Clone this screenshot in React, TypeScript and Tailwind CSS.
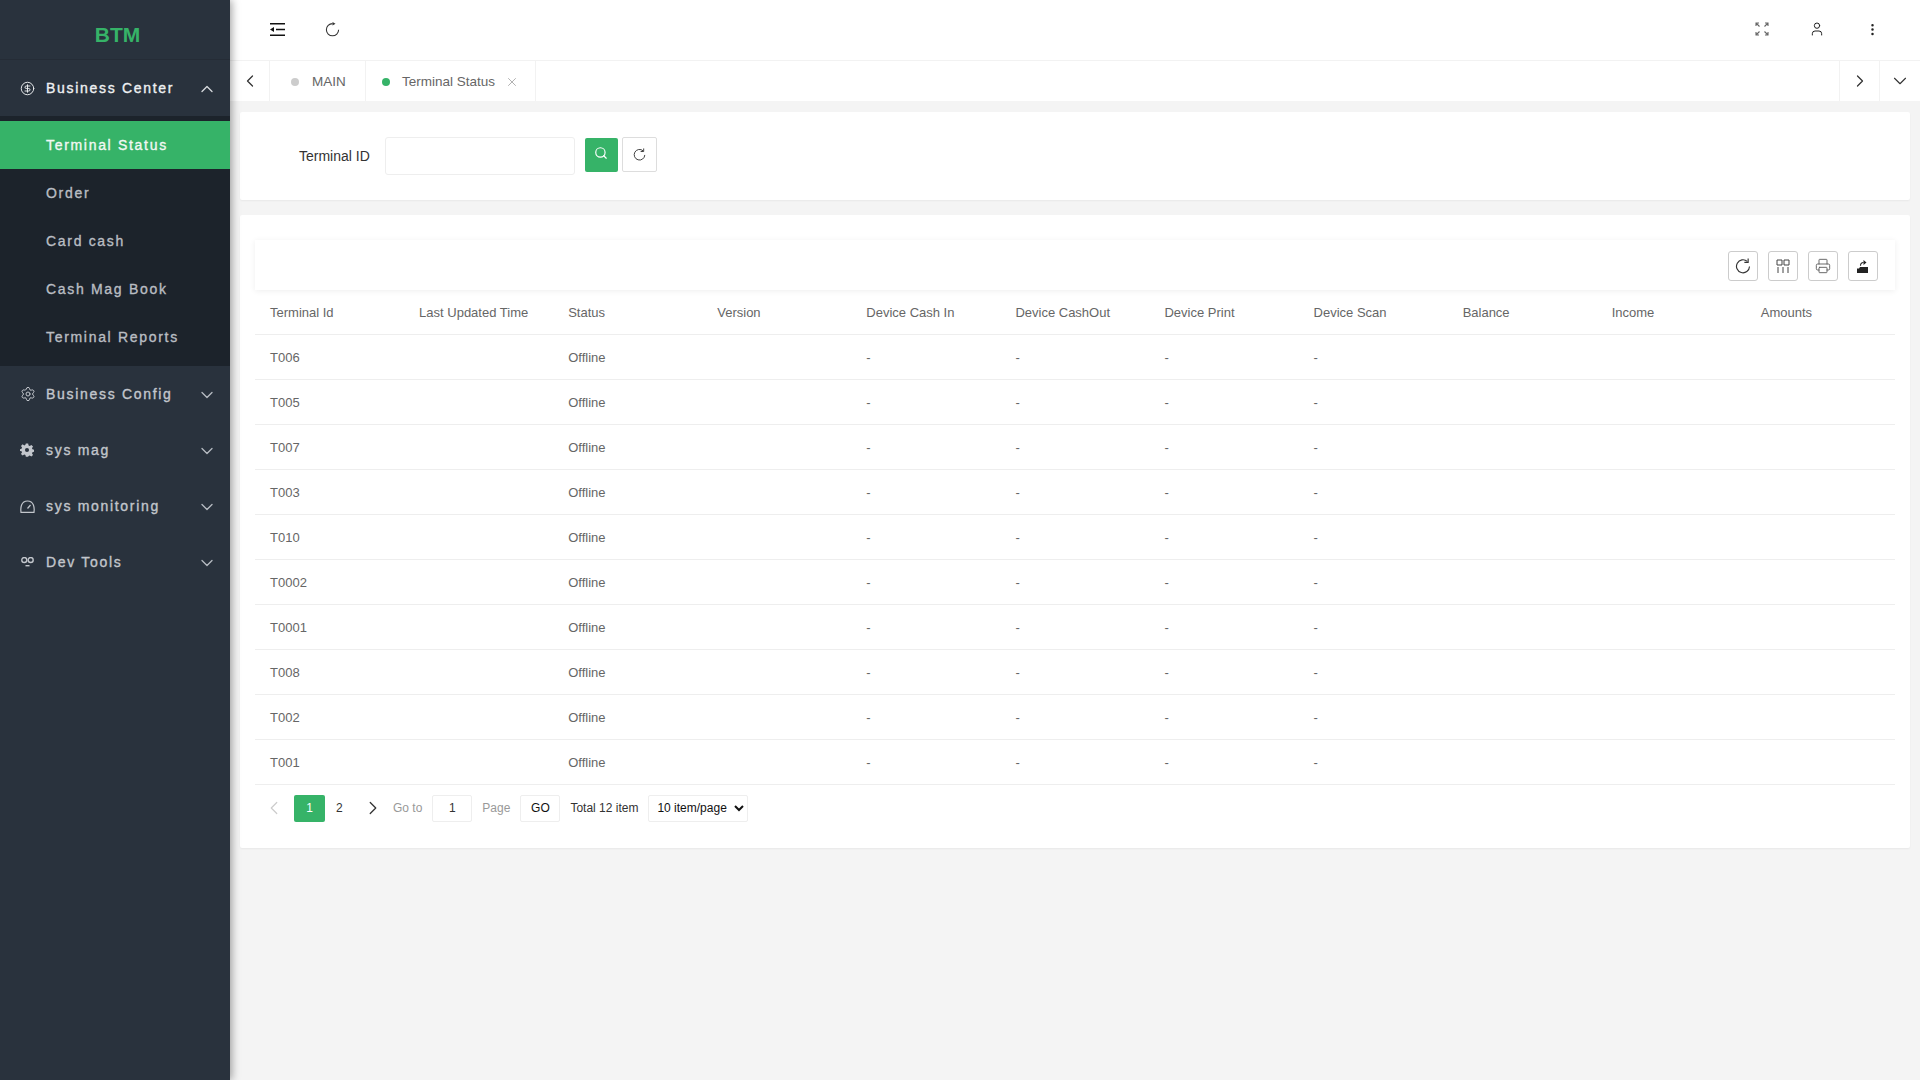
import {
  ChevronDown,
  ChevronLeft,
  ChevronRight,
  ChevronUp,
  CircleDollarSign,
  EllipsisVertical,
  Printer,
  Search,
  Settings,
  User,
  X,
} from "lucide-react";
import { ReactNode } from "react";

const columns = [
  "Terminal Id",
  "Last Updated Time",
  "Status",
  "Version",
  "Device Cash In",
  "Device CashOut",
  "Device Print",
  "Device Scan",
  "Balance",
  "Income",
  "Amounts",
];

const terminals = ["T006", "T005", "T007", "T003", "T010", "T0002", "T0001", "T008", "T002", "T001"];

const subItems = ["Order", "Card cash", "Cash Mag Book", "Terminal Reports"];

const FullscreenIcon = () => (
  <svg width="14" height="14" viewBox="0 0 14 14" fill="none" stroke="#666" strokeWidth="1.1">
    <path d="M1 4V1h3M1 1l3.500 3.500M13 4V1h-3M13 1L9.500 4.500M1 10v3h3M1 13l3.500-3.500M13 10v3h-3M13 13L9.500 9.500" />
  </svg>
);

const MenuIcon = () => (
  <svg width="15" height="13" viewBox="0 0 15 13" fill="#111">
    <path d="M0 0h15v1.500H0zM0 11.500h15V13H0zM6 5.700h9v1.500H6zM0 6.500L4 4v5z" />
  </svg>
);

// header version: arrowhead sits on top of the ring
const RefreshIcon = ({ size }: { size: number }) => (
  <svg width={size} height={size} viewBox="0 0 14 14" fill="none" stroke="#333" strokeWidth="1">
    <path d="M7 1.500A5.700 5.700 0 1 0 12.700 7.200" />
    <path d="M7 0v3.200l2.800-1.600z" fill="#333" stroke="none" />
  </svg>
);

// button version: hooked arrow at the upper right
const ReloadIcon = ({ size }: { size: number }) => (
  <svg width={size} height={size} viewBox="0 0 14 14" fill="none" stroke="#333" strokeWidth="1">
    <path d="M10.800 3A5.700 5.700 0 1 0 12.700 7.500" />
    <path d="M11.500 .5v3.300H8.200" />
  </svg>
);

const GearSolid = () => (
  <svg width="14" height="14" viewBox="0 0 24 24" fill="#c2c6cc">
    <path
      fillRule="evenodd"
      d="M10 1h4l.7 3.200 2 .9 2.800-1.800 2.800 2.800-1.800 2.800.9 2 2.600.6v3.400l-2.600.8-.9 2 1.800 2.800-2.800 2.800-2.800-1.800-2 .9L14 23.500h-4l-.7-2.800-2-.9-2.800 1.800-2.800-2.800 1.800-2.800-.9-2L0 13.900v-3.400l2.600-.6.900-2-1.800-2.800 2.800-2.800 2.800 1.800 2-.9zM12 8.500a3.500 3.500 0 100 7 3.500 3.500 0 000-7z"
    />
  </svg>
);

const GaugeIcon = () => (
  <svg width="15" height="13" viewBox="0 0 15 13" fill="none" stroke="#c2c6cc" strokeWidth="1.2">
    <path d="M1 12.300h13C14.600 8 14 1 7.500 1S.4 8 1 12.300z" />
    <path d="M7.500 8.500L10.500 5" />
  </svg>
);

const DevIcon = () => (
  <svg width="15" height="10" viewBox="0 0 15 10" fill="none" stroke="#c2c6cc" strokeWidth="1.400">
    <circle cx="4.300" cy="3" r="2.500" />
    <circle cx="10.700" cy="3" r="2.500" />
    <path d="M5.500 8.700h4" />
  </svg>
);

const ColumnsIcon = () => (
  <svg width="14" height="14" viewBox="0 0 14 14" fill="none" stroke="#444" strokeWidth="1">
    <path d="M1 1h5v5H1zM8 1h5v5H8zM2 8v6M7 8v6M12 8v6" />
  </svg>
);

const ExportIcon = () => (
  <svg width="14" height="14" viewBox="0 0 14 14" fill="#222">
    <path d="M1 9.500h2l1-1.500h8v6H1z" />
    <path d="M4.500 6.800C4.500 4.800 5.700 3.500 7.500 3.500" fill="none" stroke="#222" strokeWidth="1.100" />
    <path d="M7.500 1l3 2.500-3 2.500z" />
  </svg>
);

const MenuRow = ({ icon, label, open }: { icon: ReactNode; label: string; open?: boolean }) => (
  <div
    className={`flex h-14 items-center pl-5 pr-[13px] text-[14px] tracking-[1.69px] [-webkit-text-stroke:0.35px_currentColor] ${
      open ? "text-[#eef0f2]" : "text-[#c2c6cc]"
    }`}
  >
    <span className="flex w-[26px] shrink-0 items-center">{icon}</span>
    <span className="flex-1">{label}</span>
    {open ? (
      <ChevronUp size={20} strokeWidth={1.600} className="mt-[2px] text-[#d5d8dc]" />
    ) : (
      <ChevronDown size={20} strokeWidth={1.600} className="mt-[1px] text-[#b5bac1]" />
    )}
  </div>
);

const ToolButton = ({ children }: { children: ReactNode }) => (
  <button className="flex h-[30px] w-[30px] items-center justify-center rounded-[3px] border border-[#ccc] text-[#555]">
    {children}
  </button>
);

export default function App() {
  return (
    <div className="flex h-screen overflow-hidden bg-[#f4f4f4] font-['Liberation_Sans',Arial,sans-serif]">
      <aside className="z-10 w-[230px] shrink-0 bg-[#29323d] shadow-[2px_0_8px_rgba(0,0,0,0.35)]">
        <div className="flex h-[60px] items-center justify-center border-b border-[#252c36] pl-[5px] pt-[10px] text-[21px] font-bold text-[#36b368]">
          BTM
        </div>
        <MenuRow open label="Business Center" icon={<CircleDollarSign size={15} strokeWidth={1.500} />} />
        <div className="bg-[#1c232b] py-[5px] text-[14px] tracking-[1.69px] [-webkit-text-stroke:0.35px_currentColor]">
          <div className="flex h-12 items-center bg-[#36b368] pl-[46px] text-[#f2f8f4]">Terminal Status</div>
          {subItems.map((item) => (
            <div key={item} className="flex h-12 items-center pl-[46px] text-[#b9bdc2]">
              {item}
            </div>
          ))}
        </div>
        <MenuRow label="Business Config" icon={<Settings size={16} strokeWidth={1.500} />} />
        <MenuRow label="sys mag" icon={<GearSolid />} />
        <MenuRow label="sys monitoring" icon={<GaugeIcon />} />
        <MenuRow label="Dev Tools" icon={<DevIcon />} />
      </aside>

      <main className="flex min-w-0 flex-1 flex-col">
        <header className="flex h-[61px] items-center border-b border-[#f2f2f2] bg-white pb-[2px] pl-[40px] text-[#222]">
          <MenuIcon />
          <span className="ml-[40px]">
            <RefreshIcon size={15} />
          </span>
          <div className="ml-auto flex items-center">
            <FullscreenIcon />
            <User size={16} strokeWidth={1.500} className="ml-[40px]" />
            <EllipsisVertical size={15} strokeWidth={2} className="ml-[40px] mr-[40px]" />
          </div>
        </header>

        <nav className="flex h-10 items-stretch bg-white text-[13.5px] text-[#666]">
          <div className="flex w-10 items-center justify-center border-r border-[#f2f2f2] text-[#333]">
            <ChevronLeft size={20} strokeWidth={1.500} />
          </div>
          <div className="flex w-[96px] items-center border-r border-[#f2f2f2] pl-[21px] pt-[2px]">
            <span className="mr-[13px] h-2 w-2 rounded-full bg-[#cccccc]" />
            MAIN
          </div>
          <div className="flex w-[170px] items-center border-r border-[#f2f2f2] pl-[16px] pt-[2px]">
            <span className="mr-[12px] h-2 w-2 rounded-full bg-[#36b368]" />
            Terminal Status
            <X size={14} strokeWidth={1.300} className="ml-[10px] text-[#999]" />
          </div>
          <div className="ml-auto flex w-10 items-center justify-center border-l border-[#f2f2f2] text-[#333]">
            <ChevronRight size={20} strokeWidth={1.500} />
          </div>
          <div className="flex w-[41px] items-center justify-center border-l border-[#f2f2f2] text-[#333]">
            <ChevronDown size={22} strokeWidth={1.200} />
          </div>
        </nav>

        <div className="flex flex-1 flex-col gap-[15px] px-[10px] pt-[11px]">
          <section className="flex h-[88px] items-start rounded-[2px] bg-white pl-[59px] pt-[25px] shadow-[0_1px_2px_rgba(0,0,0,0.05)]">
            <label className="mt-[11px] text-[14px] leading-4 text-[#333]">Terminal ID</label>
            <input className="ml-[15px] h-[38px] w-[190px] rounded-[3px] border border-[#eeeeee] bg-white" />
            <button className="ml-[10px] mt-[1px] flex h-[34px] w-[33px] items-center justify-center rounded-[2px] bg-[#36b368] text-white">
              <Search size={14} strokeWidth={2} className="-mt-[4px]" />
            </button>
            <button className="ml-1 flex h-[35px] w-[35px] items-center justify-center rounded-[2px] border border-[#dddddd]">
              <ReloadIcon size={13} />
            </button>
          </section>

          <section className="h-[633px] rounded-[2px] bg-white px-[15px] pt-[25px] shadow-[0_1px_2px_rgba(0,0,0,0.05)]">
            <div className="flex h-[50px] items-center justify-end gap-[10px] pr-[17px] pt-[2px] shadow-[0_1px_6px_rgba(0,0,0,0.07)]">
              <ToolButton>
                <ReloadIcon size={16} />
              </ToolButton>
              <ToolButton>
                <ColumnsIcon />
              </ToolButton>
              <ToolButton>
                <Printer size={16} strokeWidth={1.300} />
              </ToolButton>
              <ToolButton>
                <ExportIcon />
              </ToolButton>
            </div>

            <table className="w-full table-fixed text-left text-[13px] text-[#666]">
              <thead>
                <tr className="h-[44px] border-b border-[#eeeeee]">
                  {columns.map((col) => (
                    <th key={col} className="pl-[15px] pt-[2px] font-normal">
                      {col}
                    </th>
                  ))}
                </tr>
              </thead>
              <tbody>
                {terminals.map((id) => (
                  <tr key={id} className="h-[45px] border-b border-[#eeeeee]">
                    <td className="pl-[15px] pt-[2px]">{id}</td>
                    <td className="pl-[15px]" />
                    <td className="pl-[15px] pt-[2px]">Offline</td>
                    <td className="pl-[15px]" />
                    <td className="pl-[15px] pt-[2px]">-</td>
                    <td className="pl-[15px] pt-[2px]">-</td>
                    <td className="pl-[15px] pt-[2px]">-</td>
                    <td className="pl-[15px] pt-[2px]">-</td>
                    <td className="pl-[15px]" />
                    <td className="pl-[15px]" />
                    <td className="pl-[15px]" />
                  </tr>
                ))}
              </tbody>
            </table>

            <div className="flex items-center pl-[8px] pt-[10px] text-[12px] text-[#333]">
              <ChevronLeft size={22} strokeWidth={1.300} className="text-[#cccccc]" />
              <span className="ml-[9px] flex h-[27px] w-[31px] items-center justify-center rounded-[2px] bg-[#36b368] text-white">
                1
              </span>
              <span className="ml-[11px] w-[6px]">2</span>
              <ChevronRight size={22} strokeWidth={1.400} className="ml-[20px] text-[#333]" />
              <span className="ml-[9px] text-[#999]">Go to</span>
              <input
                defaultValue="1"
                className="ml-[10px] h-[27px] w-10 rounded-[2px] border border-[#eeeeee] text-center"
              />
              <span className="ml-[10px] text-[#999]">Page</span>
              <button className="ml-[10px] h-[27px] w-10 rounded-[2px] border border-[#eeeeee] text-[#111]">GO</button>
              <span className="ml-[10px]">Total 12 item</span>
              <select className="ml-[10px] h-[27px] w-[100px] rounded-[2px] border border-[#eeeeee] bg-white pl-[4px] text-[#111]">
                <option>10 item/page</option>
              </select>
            </div>
          </section>
        </div>
      </main>
    </div>
  );
}
